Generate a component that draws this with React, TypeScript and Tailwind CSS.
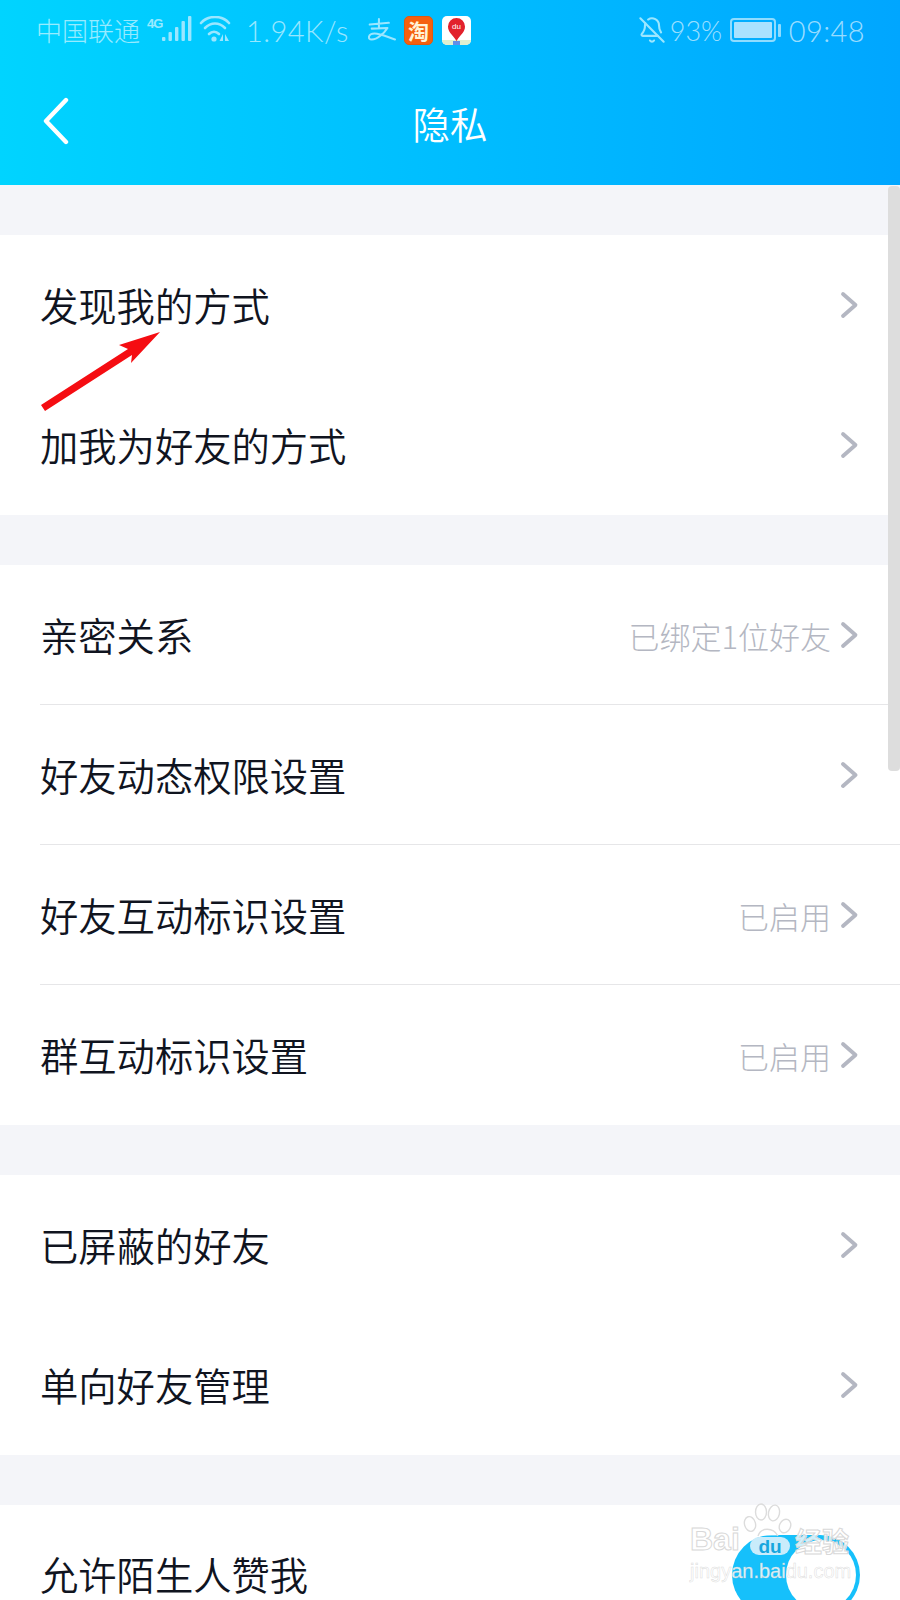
import { BellOff } from "lucide-react";

const cjk = { fontFamily: '"Noto Sans CJK SC", sans-serif' };

function Chevron() {
  return (
    <svg width="20" height="28" viewBox="0 0 20 28" className="shrink-0">
      <path d="M3 3 L15.5 14 L3 25" fill="none" stroke="#b4b7c2" strokeWidth="3.8" strokeLinecap="round" strokeLinejoin="round" />
    </svg>
  );
}

function Row({ label, value, divider }: { label: string; value?: string; divider?: boolean }) {
  return (
    <div className="relative flex h-[140px] items-center pl-[40px] pr-[40px]">
      <span className="flex-1 text-[38.3px] font-[350] leading-none text-[#10141f]">{label}</span>
      {value && <span className="mr-[9px] text-[31px] font-light leading-none text-[#b4b7c2]">{value}</span>}
      <Chevron />
      {divider && <div className="absolute bottom-0 left-[40px] right-0 h-[1px] bg-[#e6e6e8]" />}
    </div>
  );
}

function Gap() {
  return <div className="h-[50px] bg-[#f4f5f9]" />;
}

function StatusBar() {
  return (
    <div className="flex h-[60px] items-center pl-[36px] pr-[35px] text-[rgba(255,255,255,0.6)]">
      <span className="w-[105px] text-[26px] font-light leading-none">中国联通</span>
      <span className="ml-[6px] w-[15px] self-start whitespace-nowrap pt-[17px] font-['Liberation_Sans'] text-[13px] font-bold leading-none tracking-[-1px]">4G</span>
      <svg width="30" height="28" viewBox="0 0 30 28">
        <g fill="#9be6ff">
          <rect x="0" y="21" width="3.4" height="4" rx="1" />
          <rect x="6.5" y="16" width="3.4" height="9" rx="1" />
          <rect x="13" y="11" width="3.4" height="14" rx="1" />
          <rect x="19.5" y="5" width="3.4" height="20" rx="1" />
          <rect x="26" y="0" width="3.4" height="25" rx="1" />
        </g>
      </svg>
      <svg width="32" height="28" viewBox="0 0 32 28" className="ml-[7px]">
        <g fill="none" stroke="#9be6ff" strokeWidth="2.6" strokeLinecap="round">
          <path d="M2 7 C9 -1 23 -1 30 7" />
          <path d="M6 12 C12 6 20 6 26 12" />
          <path d="M10 18 C13 15 17 15 20 18" />
        </g>
        <circle cx="15" cy="23" r="2.6" fill="#9be6ff" />
        <path d="M24 18 L24 25 L20.5 25 Z M26 18 L26 25 L30 25 Z" fill="#9be6ff" />
      </svg>
      <span className="ml-[15px] w-[103px] whitespace-nowrap font-['Lato'] text-[29px] font-light leading-none tracking-[0.45px]">1.94K/s</span>
      <svg width="28" height="24" viewBox="25 28 82 68" className="ml-[19px]">
        <path d="M30 46 L86 41 M57 30 L57 56 M36 58 L82 56 C72 72 52 90 36 90 C22 90 26 72 44 72 C64 72 84 84 104 90" fill="none" stroke="#9be6ff" strokeWidth="6" strokeLinecap="round" strokeLinejoin="round" />
      </svg>
      <span className="ml-[8px] flex h-[29px] w-[29px] items-center justify-center rounded-[5px] border border-[#e2580f] bg-[#f5600f] text-[21px] font-bold leading-none text-[#fff3d8]">淘</span>
      <span className="ml-[9px] h-[29px] w-[29px] overflow-hidden rounded-[5px] bg-white">
        <svg width="29" height="29" viewBox="0 0 29 29">
          <rect y="24" width="29" height="5" fill="#dff0d0" />
          <rect x="11" y="25" width="7" height="4" fill="#5f8fe8" />
          <path d="M14.5 25 C10 18 6 16 6 10.5 A8.5 8.5 0 0 1 23 10.5 C23 16 19 18 14.5 25 Z" fill="#e2212c" />
          <text x="14.5" y="13" textAnchor="middle" fontSize="8" fontFamily="Liberation Sans" fill="#fff">du</text>
        </svg>
      </span>
      <div className="flex-1" />
      <BellOff size={28} strokeWidth={1.8} color="#9be6ff" />
      <span className="ml-[4px] w-[54px] whitespace-nowrap font-['Lato'] text-[27px] font-light leading-none text-[rgba(255,255,255,0.62)]">93%</span>
      <div className="ml-[6px] flex items-center">
        <div className="h-[24px] w-[46px] rounded-[4px] border-[2px] border-[#8fdcff] p-[2px]">
          <div className="h-full w-full rounded-[1px] bg-[#a8e2ff]" />
        </div>
        <div className="ml-[2px] h-[13px] w-[3px] rounded-[1px] bg-[#8fdcff]" />
      </div>
      <span className="ml-[8px] whitespace-nowrap font-['Lato'] text-[29px] font-light leading-none tracking-[0.4px] text-[rgba(255,255,255,0.62)]">09:48</span>
    </div>
  );
}

export default function App() {
  return (
    <div className="relative h-[1600px] w-[900px] overflow-hidden bg-white" style={cjk}>
      <header className="h-[185px] bg-gradient-to-r from-[#00d4ff] to-[#00a6ff]">
        <StatusBar />
        <div className="relative flex h-[125px] items-center justify-center">
          <svg width="30" height="48" viewBox="0 0 30 48" className="absolute left-[41px] top-[37px]">
            <path d="M25 3 L5 24 L25 45" fill="none" stroke="#fff" strokeWidth="4.4" strokeLinecap="round" strokeLinejoin="round" />
          </svg>
          <span className="mt-[1px] text-[37.5px] font-[350] leading-none text-white">隐私</span>
        </div>
      </header>

      <Gap />
      <Row label="发现我的方式" />
      <Row label="加我为好友的方式" />
      <Gap />
      <Row label="亲密关系" value="已绑定1位好友" divider />
      <Row label="好友动态权限设置" divider />
      <Row label="好友互动标识设置" value="已启用" divider />
      <Row label="群互动标识设置" value="已启用" />
      <Gap />
      <Row label="已屏蔽的好友" />
      <Row label="单向好友管理" />
      <Gap />
      <div className="flex h-[95px] items-start justify-between pl-[40px] pr-[40px]">
        <span className="mt-[50px] text-[38.3px] font-[350] leading-none text-[#10141f]">允许陌生人赞我</span>
        <div className="mt-[30px] flex h-[80px] w-[128px] shrink-0 items-center justify-end rounded-full bg-[#16c0fb] pr-[4px]">
          <div className="h-[70px] w-[70px] rounded-full bg-white" />
        </div>
      </div>

      {/* scrollbar */}
      <div className="absolute left-[888px] top-[186px] h-[585px] w-[12px] rounded-[4px] bg-[#dddddd]" />

      {/* annotation arrow */}
      <svg width="900" height="500" viewBox="0 0 900 500" className="absolute left-0 top-0">
        <polygon points="160,332 119,345 128,349 41,405 45,411 132,355 131,363" fill="#f50d12" />
      </svg>

      {/* watermark */}
      <div className="absolute left-[690px] top-[1505px] h-[90px] w-[170px]">
        <svg width="50" height="36" viewBox="0 0 50 36" className="absolute left-[53px] top-[-2px]">
          <g fill="rgba(255,255,255,0.4)" stroke="#dcdcdc" strokeWidth="1.4">
            <ellipse cx="7" cy="21" rx="5.5" ry="7.5" transform="rotate(-15 7 21)" />
            <ellipse cx="18" cy="9" rx="5.5" ry="8" />
            <ellipse cx="31" cy="10" rx="5.5" ry="8" transform="rotate(12 31 10)" />
            <ellipse cx="42" cy="23" rx="5.5" ry="7" transform="rotate(25 42 23)" />
            <path d="M15 33 C18 24 30 24 35 33" />
          </g>
        </svg>
        <span className="absolute left-0 top-[18px] font-['Liberation_Sans'] text-[32px] font-bold leading-none text-[rgba(255,255,255,0.6)] [-webkit-text-stroke:1px_#d8d8d8]">Bai</span>
        <span className="absolute left-[60px] top-[32px] flex h-[18px] w-[40px] items-center justify-center rounded-full bg-[#c9ecfb] font-['Liberation_Sans'] text-[19px] font-bold leading-none text-[#16a6de]">du</span>
        <span className="absolute left-[105px] top-[22px] whitespace-nowrap text-[27px] font-bold leading-none text-[rgba(255,255,255,0.8)] [-webkit-text-stroke:1px_#d8d8d8]">经验</span>
        <span className="absolute left-0 top-[56px] whitespace-nowrap font-['Liberation_Sans'] text-[20px] leading-none text-[rgba(255,255,255,0.85)] [-webkit-text-stroke:0.5px_rgba(205,205,205,0.7)]">jingyan.baidu.com</span>
      </div>
    </div>
  );
}
